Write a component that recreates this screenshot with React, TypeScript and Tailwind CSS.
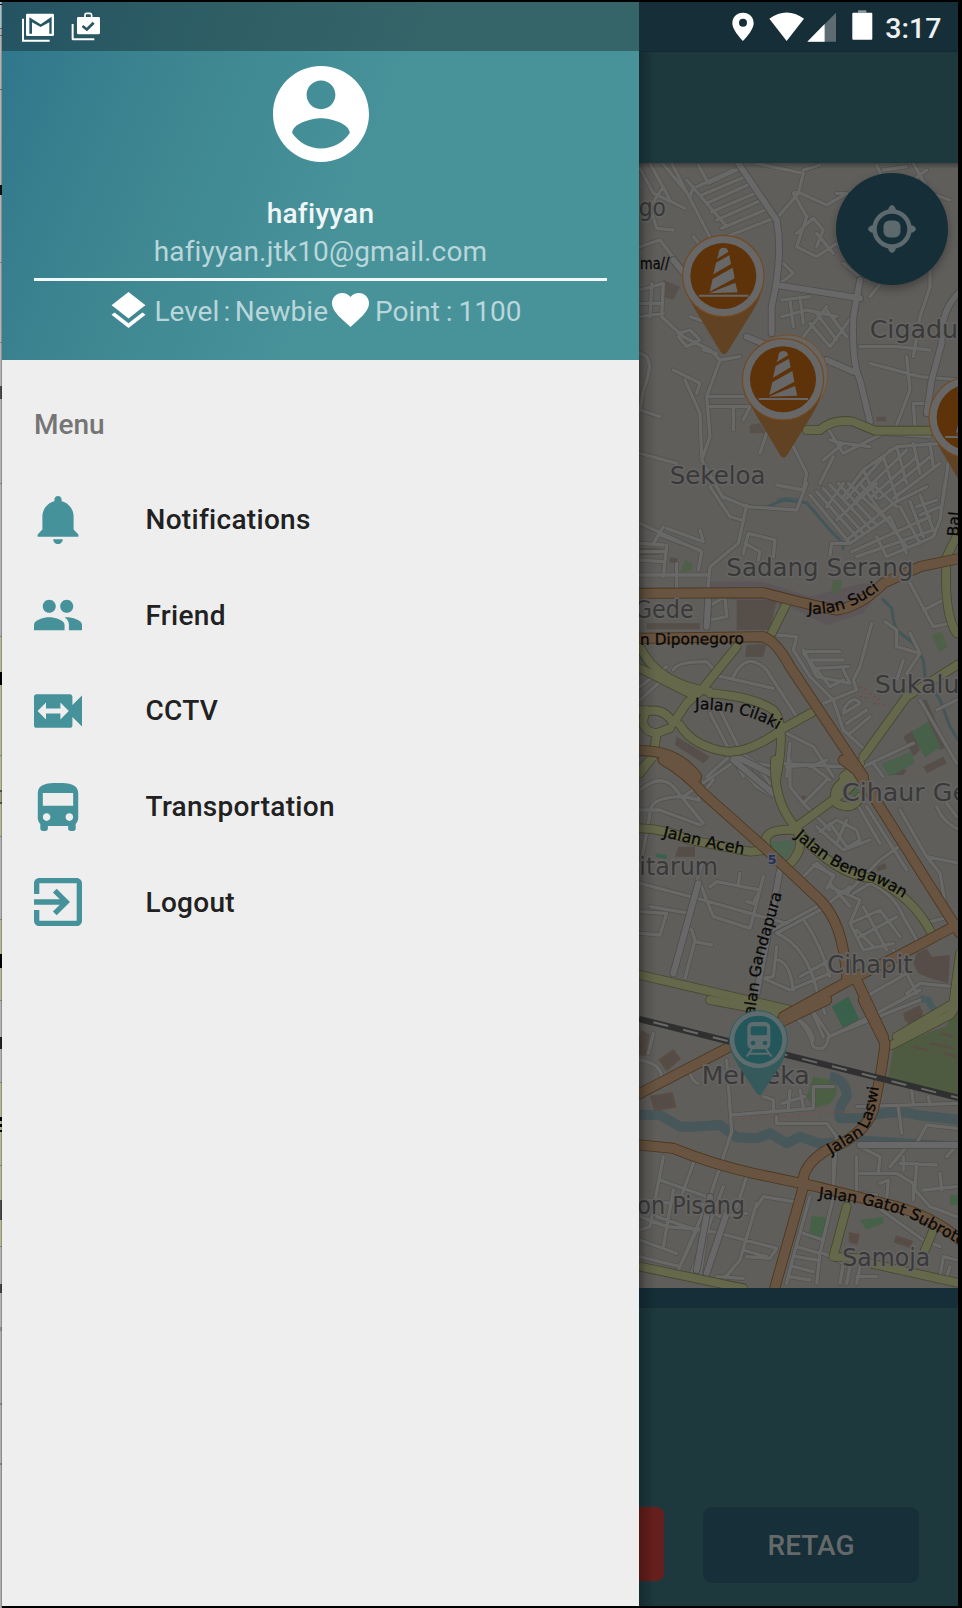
import React from "react";

type Tile = { y: number; d: string };

/* Every map tile is drawn in its own grid, three units to the pixel. */
const place = (y: number) => `translate(630 ${y}) scale(0.33333)`;

function Roads({ tiles, casing, fill, width, edge }: { tiles: Tile[]; casing: string; fill: string; width: number; edge: number }) {
  return (
    <g fill="none" strokeLinecap="round" strokeLinejoin="round">
      {tiles.map((t, i) => (
        <path key={"c" + i} d={t.d} transform={place(t.y)} stroke={casing} strokeWidth={width + edge} />
      ))}
      {tiles.map((t, i) => (
        <path key={"f" + i} d={t.d} transform={place(t.y)} stroke={fill} strokeWidth={width} />
      ))}
    </g>
  );
}

const lanes: Tile[] = [
  {
    y: 150,
    d: "M60 40L120 150M90 30L180 140L190 110M120 30L260 300M170 90L290 230M200 110L310 60M215 135L345 80M230 160L365 100M245 185L375 130M260 210L395 150M275 235L405 180M290 260L430 205M205 45L235 100L320 60M30 55L70 130L165 175M100 110L60 170L80 235L130 240M30 290L90 270L120 310L170 370M30 420L100 400M30 460L90 460M30 500L100 490M65 400L60 500M100 400L95 500L160 560L240 600L270 630L230 740L240 860L215 930L280 1045M190 260L230 310M380 40L520 70L505 130L440 205M520 60L570 45M490 130Q500 120 545 145L590 165L650 130L620 130M490 130L530 200L500 290L560 320L620 280L680 340M500 250L550 205L580 240L560 290M460 340L490 370L450 400M560 250L610 310M455 450L540 440M455 500L530 480M480 450L490 530M510 440L520 520M530 480L620 500M540 520L600 590M560 490L620 570M590 480L650 560M520 560L590 470M600 590L680 480M640 340L700 390M740 330L760 390L720 440M900 350L900 410L870 500L850 620M890 60L850 90L870 120M740 45L760 90M760 60L830 50M850 40L900 130L960 150M690 590L800 590L900 600M720 640L870 680L990 690M830 620L840 720L800 825M850 760L855 830M850 760L900 760M30 610Q80 620 40 720L30 780M30 780L90 800M130 660L210 700L200 730M165 690L210 790L215 920M30 910L140 940M270 630L330 620M240 740L340 740M240 770L360 770L340 810M310 775L310 840M145 550L180 540L210 570L170 590L145 560M220 600L260 610M180 500L240 520M410 850L390 910M480 870L530 970L520 1020L440 1005M590 830L640 910L760 850L900 860M600 870L640 880L580 930M640 880L720 890M610 920L570 1000M640 1040L700 960L800 890L940 880M650 1045L780 900M680 1045L830 900M720 1045L860 920M750 1045L900 920M790 1045L930 940M760 920L800 1045M800 890L830 1000M850 880L870 970M900 880L910 950M960 900L940 1045M700 960L740 1045",
  },
  {
    y: 480,
    d: "M240 20L300 110L335 120M350 75L325 190L240 260L232 345M280 50L350 80L500 90L530 10M30 130L215 215L205 270M90 165L210 210M110 145L220 185L210 150M100 140L70 190M30 190L100 195M30 215L110 215M30 240L100 245M110 195L100 290M30 285L235 285M140 250L140 325M340 220L355 160L435 180L430 230M345 190L390 215L385 240M540 45L660 190L780 110M560 35L680 170M580 25L700 160M600 15L720 145M625 10L740 135M655 10L770 120M690 10L830 200M725 10L800 80M590 80L640 10M620 120L740 10M650 180L790 70L890 20M665 215L900 110M680 230L910 150M780 110L830 220M810 80L870 190M840 65L880 170M870 45L910 150M860 80L920 60M870 105L930 80M945 10L930 120L910 170L770 230L740 170M600 225L605 190L660 190M840 310L910 440L960 430M880 390L960 350M275 590L430 625M130 570Q140 545 230 545L270 590M310 590Q350 510 410 570L500 710M30 620L110 560M30 660L90 605M440 465L500 470L490 510L540 590L610 660M520 510L560 590L660 610L640 570M530 515L630 515M545 540L640 540M560 565L655 560M520 520L600 620L640 600M725 430L690 560L670 600L680 630L580 670M610 660L640 750L700 805M640 690Q670 640 690 670L640 700M650 730L710 690M660 760L720 710M765 425L800 450L800 500L870 520L830 580L860 640M840 460L870 520M820 540L800 600M870 660L980 850M920 690L980 660M240 700L340 890M270 690L370 890M470 760L550 800L610 890M480 790L470 890M440 850L640 860M230 890L320 810L380 850L440 860M700 860L850 790M730 850L760 890M285 350L290 410L240 420L235 380Z",
  },
  {
    y: 760,
    d: "M30 90Q90 40 130 80L220 190M30 150L90 150L210 195M160 110L320 0M200 120L250 60M60 150Q70 110 160 110L210 120M310 0L380 80L430 110M365 0L420 70M60 160L40 270L30 320M130 650L215 310M165 655L195 540L185 510L175 505M195 545L245 555M30 370L220 420L360 460L470 490M60 440L180 460M30 455L110 460L90 525L30 520M210 370L250 470L360 505L400 350M240 380L260 365L390 390L370 430L350 425M330 340L325 375M480 0L480 80L520 130L590 60M470 20L540 15L600 60M540 20L590 0M520 130L600 210M560 200L640 270L720 240M570 215L620 180L680 210L690 240L640 270M600 190L650 260M650 180L620 250M680 130L750 250M710 140L830 330M810 150L890 290L990 310M920 140Q940 190 990 210M950 130L980 170M520 350L560 310L610 350L590 385M550 315L610 345M600 380L690 420L660 490L700 570L790 550M650 400L750 300L820 250M600 370L660 440M670 400L720 370Q790 400 820 470L860 540M660 490L750 450L810 530M690 530L800 470M700 440L770 570M680 510L730 560M410 520L560 440M440 520L570 450L660 380M440 520Q530 560 560 690L585 760M525 485Q570 550 600 650M440 560L430 650L400 655L480 690L600 640M445 600Q480 610 490 690M600 830L740 760L870 690M690 720L830 640L860 700M790 570L830 640M880 490L940 475M890 290L930 340L950 460M830 700L870 670L970 680M480 765Q540 790 550 840M540 740L580 830M600 600L510 650",
  },
  {
    y: 1000,
    d: "M30 180Q90 190 95 230M70 100L55 160M290 180L305 395L240 590L145 810M180 220Q190 250 205 250M490 50Q530 70 550 140Q590 160 595 110L870 0M540 20L600 110M305 345L550 325L550 260L610 260M440 350L440 370L590 370L620 410M400 290L430 300L430 335M480 270L475 325M510 270L520 320M455 310L525 290M610 480L610 550M620 410L610 560M680 320L990 310M845 270L850 310M805 325L815 400M895 290L900 315M690 430L990 435M860 430L890 375L980 385M950 470L985 430M680 470L680 580L740 585M690 520L800 520L850 550L850 600M750 550L775 540L770 600M690 440L750 470L745 520M720 440L830 440L780 500M810 490L920 495M860 490L855 570L900 620M930 520L935 570M880 570L980 560M820 510L820 470M100 470L60 680L30 690M190 490L150 600M350 530L320 620M90 540L230 590M380 620L400 590L490 605M30 650L110 680M50 600L120 610M30 720L140 760M110 680L230 690L440 745L420 775L350 770M380 610L330 780L270 850M200 600L270 650L350 640M180 830L280 560M210 830L230 690M30 770L150 800M260 830L340 835M130 570L100 740M80 650L200 690L160 780M340 750L410 770M540 590L490 770L470 850M610 590L570 760L560 850M520 700L580 720M500 740L570 760M500 770L560 780M490 800L550 815M480 830L540 840M580 760L640 790L630 850M660 800L650 850M680 830L740 830M900 620L980 650M740 620L880 720L930 740M930 830L940 770L980 780M950 830L960 800M690 800L680 850",
  },
];

const streets: Tile[] = [
  { y: 150, d: "M325 40L440 210Q460 320 425 470L425 550M440 405L690 445M690 390L670 500Q665 640 690 690L720 815M990 425Q930 480 935 580L905 690L890 790M590 630L670 665M350 560L420 590M130 330L170 380" },
  { y: 480, d: "M235 350L230 440M300 820L440 890" },
  { y: 760, d: "M450 330L380 700M310 0L430 100M205 370L130 640" },
  { y: 1000, d: "M240 590L200 810M290 640L230 820M690 435L980 435" },
];

const yellow: Tile[] = [
  { y: 150, d: "M530 840L570 840Q610 805 670 815L735 842L905 842" },
  { y: 480, d: "M470 370L425 460M320 500L215 630L170 670L130 730M30 500Q80 610 240 635M30 565L180 640M240 640Q370 650 430 690Q470 730 440 890M550 695L460 745Q360 820 290 815Q190 800 150 735M130 730Q100 680 50 695L30 690M50 690Q20 750 80 760L120 745M80 760L70 830L30 870M700 830L830 650L990 550M985 160L950 230Q940 400 980 460M640 890L690 850" },
  { y: 760, d: "M30 40L60 0M30 205Q100 205 180 240L360 275L405 270M435 0Q430 130 500 205M500 200L650 90L690 50M665 50Q600 80 620 130Q670 155 690 110M490 210Q390 205 410 260M500 210Q530 270 470 320M500 210Q620 350 730 355Q850 410 905 520M30 645L480 750M990 580L970 730L800 830" },
  { y: 1000, d: "M240 0L450 40M990 0L960 45L785 135M650 620L610 770L680 775M30 800L340 865M720 790L990 850M910 690L885 750" },
];

const orange: Tile[] = [
  { y: 480, d: "M30 340L400 338Q560 380 620 390Q690 380 760 310L870 260L990 235M30 475L400 470Q440 485 480 560L700 890M30 812Q140 810 200 890" },
  { y: 760, d: "M100 0Q170 40 220 100L400 260L570 420Q640 490 650 650M640 0L680 30L990 520M990 490L800 590L660 660L460 770M680 660L760 830" },
  { y: 1000, d: "M700 0L765 130Q760 190 730 330Q700 410 590 450Q510 500 520 560M30 280L290 145L590 0M30 435L130 445Q240 490 370 520L560 560L760 610Q900 640 990 720M520 560L435 862" },
];

type Street = { id: string; y: number; d: string; text: string; size: number; len?: number };
const streetNames: Street[] = [
  { id: "suci", y: 480, d: "M533 401Q653 408 763 318", text: "Jalan Suci", size: 47, len: 232 },
  { id: "dipo", y: 480, d: "M30 495L352 492", text: "n Diponegoro", size: 47, len: 312 },
  { id: "cilaki", y: 480, d: "M195 688Q343 686 453 756", text: "Jalan Cilaki", size: 47, len: 258 },
  { id: "aceh", y: 760, d: "M98 230Q212 258 352 286", text: "Jalan Aceh", size: 47, len: 248 },
  { id: "beng", y: 760, d: "M493 231Q623 344 703 354Q783 384 853 439", text: "Jalan Bengawan", size: 47, len: 378 },
  { id: "ganda", y: 760, d: "M371 782L398 600Q428 500 458 390", text: "Jalan Gandapura", size: 47, len: 392 },
  { id: "laswi", y: 1000, d: "M603 464L693 409Q738 370 750 226", text: "Jalan Laswi", size: 47, len: 266 },
  { id: "gatot", y: 1000, d: "M565 594Q763 616 853 661L1013 746", text: "Jalan Gatot Subroto", size: 47, len: 462 },
  { id: "bal", y: 480, d: "M985 170L993 60", text: "Bal", size: 47 },
  { id: "ma", y: 150, d: "M30 356L130 356", text: "ma//", size: 45, len: 88 },
];

type Area = { x: number; y: number; tile: number; text: string; len?: number };
const areas: Area[] = [
  { tile: 150, x: 26, y: 197, text: "go", len: 82 },
  { tile: 150, x: 719, y: 565, text: "Cigadung" },
  { tile: 150, x: 119, y: 1003, text: "Sekeloa", len: 288 },
  { tile: 480, x: 289, y: 288, text: "Sadang Serang", len: 561 },
  { tile: 480, x: 14, y: 415, text: "Gede", len: 177 },
  { tile: 480, x: 734, y: 638, text: "Sukaluyu" },
  { tile: 760, x: 636, y: 122, text: "Cihaur Geulis" },
  { tile: 760, x: 28, y: 346, text: "itarum", len: 236 },
  { tile: 760, x: 592, y: 640, text: "Cihapit", len: 256 },
  { tile: 1000, x: 215, y: 252, text: "Merdeka", len: 324 },
  { tile: 1000, x: 22, y: 641, text: "on Pisang", len: 323 },
  { tile: 1000, x: 637, y: 799, text: "Samoja", len: 264 },
];

function Lighthouse({ x, y, twin }: { x: number; y: number; twin?: boolean }) {
  return (
    <g transform={`translate(${x} ${y})`}>
      {twin && <circle cx="13" cy="-11" r="122" fill="#676663" stroke="#75502a" strokeWidth="3" />}
      <path d="M-119 30Q-100 75 -82 105L-8 228Q2 242 12 228L88 105Q110 70 119 30Z" fill="#614223" />
      <circle r="122" fill="#676767" stroke="#75491d" strokeWidth="3.5" />
      <circle r="99" fill="#5e330a" />
      <path d="M-15 -62Q-15 -85 0 -85Q14 -85 15 -72L-20 -51ZM-22 -40L18 -62L23 -36L-30 -5ZM-32 9L28 -25L34 7L-41 47ZM-43 52L36 20L43 49Z" fill="#676767" />
      <path d="M-73 59H75" stroke="#676767" strokeWidth="6" />
    </g>
  );
}

function CityMap() {
  return (
    <svg className="block h-full w-full" viewBox="639 163 319 1125" preserveAspectRatio="none">
      <defs>
        <linearGradient id="edge" x1="0" x2="1" y1="0" y2="0">
          <stop offset="0" stopColor="#000" stopOpacity="0.36" />
          <stop offset="0.4" stopColor="#000" stopOpacity="0.12" />
          <stop offset="1" stopColor="#000" stopOpacity="0" />
        </linearGradient>
        <linearGradient id="under" x1="0" x2="0" y1="0" y2="1">
          <stop offset="0" stopColor="#000" stopOpacity="0.3" />
          <stop offset="1" stopColor="#000" stopOpacity="0" />
        </linearGradient>
      </defs>
      <rect x="639" y="163" width="320" height="1126" fill="#5f5e5b" />

      {/* land use and water */}
      <g transform={place(150)}>
        <path d="M100 390l50 20-20 40-30-10zM740 800h28v14h-28zM360 825l30-5 20 30-50 0z" fill="#58504b" />
        <path d="M440 1050q30-10 70 0" stroke="#4b5a5c" strokeWidth="8" fill="none" />
      </g>
      <g transform={place(480)}>
        <path d="M235 305L400 305L540 350L700 310L760 320L700 400L590 435L480 380L240 350Z" fill="#5d5658" />
        <path d="M320 360H440L420 450H320ZM350 495L410 490L400 530H345ZM140 770L240 830L220 850L135 795ZM120 232l24 4-6 14-20-4zM30 205h60v20h-60zM50 430h160v18H50zM820 770l30-20 20 60-20 20zM870 660l20 0 60 140-20 10zM880 860l60-30 10 20-60 30z" fill="#564e49" />
        <path d="M165 240l22 10-2 22-34 5zM610 300h26l-6 42-28-4zM905 465l30-10 18 45-25 15z" fill="#4e6048" />
        <path d="M845 755L895 725L932 800L885 832ZM757 858L840 815L853 845L780 890Z" fill="#466049" />
        <path d="M30 530L80 590" stroke="#426049" strokeWidth="12" />
        <path d="M340 75L400 85L460 60L530 68L600 150L635 185L640 210M755 355L785 385L790 420L800 450L850 490L880 540L885 590L930 660L960 740L985 780" stroke="#455659" strokeWidth="9" fill="none" />
        <path d="M690 620l20 10M690 650l30 5M720 640l30 20M730 670l40 5" stroke="#754840" strokeWidth="4" strokeDasharray="6 8" />
      </g>
      <g transform={place(760)}>
        <path d="M860 580L890 565L905 590L960 585L955 670L900 655L865 640L850 610ZM145 260h50v30h-60zM740 320l25-10 5 15-30 10zM820 760l50-25 5 20-50 30zM515 105l15 5-5 15-12-5zM790 20l40 10-10 15-30 0z" fill="#564d48" />
        <path d="M420 245L490 240L488 270L462 300L430 285Z" fill="#4c6450" />
        <path d="M757 10L840-20L853 10L780 50ZM645 90l30-15 15 15-20 20zM460 490l28 5-20 14z" fill="#4a614b" />
        <path d="M607 740L655 710L688 780L640 803Z" fill="#38604a" />
        <path d="M75 280l35 5v12l-30-5z" fill="#39604c" />
        <path d="M870 715L895 720Q910 770 990 780" stroke="#475a5c" strokeWidth="20" fill="none" />
      </g>
      <g transform={place(1000)}>
        <path d="M990 65Q850 110 790 150L775 230L990 300Z" fill="#4e5b40" />
        <path d="M990 5L950 75L990 90Z" fill="#4e5b40" />
        <path d="M550 230L600 240Q640 270 600 310L550 325L530 290Z" fill="#4b5f42" />
        <path d="M605 20L655 -10L688 60L640 85Z" fill="#38604a" />
        <path d="M545 648L595 652L580 725L535 715ZM690 660l70-10v20l-50 20zM960 585h25v30h-25z" fill="#476149" />
        <path d="M30 345H90L150 380H190L270 375L320 412L380 415L420 400L470 430L510 410L580 435M600 230Q650 240 650 290Q620 330 630 355L690 355Q800 325 860 345L990 360" stroke="#485759" strokeWidth="30" fill="none" strokeLinejoin="round" />
        <path d="M570 425L680 415L990 435" stroke="#485759" strokeWidth="18" fill="none" />
        <path d="M90 180l40-28 18 25-38 32zM65 290l60-10 10 40-60 10zM850 140l45 12M930 100l40 10M900 130l70 15M940 160l40 10M660 700l25 5-5 25-20-5zM800 710l45 15-5 15-45-15zM35 95l20 10-10 60-20-5zM835 50l40-15v20l-40 15z" fill="#564c47" stroke="#594d44" strokeWidth="7" />
        <path d="M315 360L680 332" stroke="#765049" strokeWidth="4" strokeDasharray="9 12" />
      </g>

      <Roads tiles={lanes} casing="#51504f" fill="#686867" width={10} edge={4} />
      <Roads tiles={streets} casing="#4e4d4c" fill="#686868" width={18} edge={5} />
      <Roads tiles={yellow} casing="#46482f" fill="#65684b" width={24} edge={5} />
      <Roads tiles={orange} casing="#4b371e" fill="#685440" width={28} edge={5} />

      <g transform={place(1000)} fill="none">
        <path d="M27 57L300 125L470 165L990 295" stroke="#303031" strokeWidth="19" />
        <path d="M70 67L300 125L470 165L990 295" stroke="#696969" strokeWidth="6" strokeDasharray="46 46" />
      </g>

      {/* place and street names */}
      <g fontFamily="DejaVu Sans, sans-serif" strokeLinejoin="round" style={{ paintOrder: "stroke" }}>
        {areas.map((a) => (
          <text key={a.text} transform={place(a.tile)} x={a.x} y={a.y} fontSize="76" textLength={a.len} lengthAdjust="spacingAndGlyphs" fill="#39393a" stroke="#656462" strokeWidth="10">
            {a.text}
          </text>
        ))}
        {streetNames.map((s) => (
          <g key={s.id} transform={place(s.y)}>
            <path id={s.id} d={s.d} fill="none" />
            <text fontSize={s.size} fill="#080808" stroke="#080808" strokeWidth="0.8" textLength={s.len} lengthAdjust="spacingAndGlyphs">
              <textPath href={"#" + s.id} textLength={s.len} lengthAdjust="spacingAndGlyphs">{s.text}</textPath>
            </text>
          </g>
        ))}
        <g transform={place(760)}>
          <rect x="412" y="278" width="28" height="38" fill="#5e6268" />
          <text x="413" y="311" fontSize="38" fontWeight="bold" fill="#28304f">5</text>
        </g>
      </g>

      {/* pins */}
      <g transform={place(150)}>
        <Lighthouse x={280} y={378} />
        <Lighthouse x={459} y={688} twin />
        <Lighthouse x={1019} y={802} />
      </g>
      <g transform={place(1000)}>
        <path d="M301 150Q320 190 330 205L380 280Q388 292 396 280L446 205Q460 185 470 150Z" fill="#36595c" />
        <circle cx="385" cy="119" r="87" fill="#5f6c6d" stroke="#31595c" strokeWidth="3" />
        <circle cx="385" cy="119" r="72" fill="#23575b" />
        <rect x="352" y="66" width="69" height="82" rx="16" fill="#5f6c6d" />
        <rect x="362" y="79" width="49" height="27" rx="5" fill="#23575b" />
        <circle cx="369" cy="129" r="7" fill="#23575b" />
        <circle cx="405" cy="129" r="7" fill="#23575b" />
        <path d="M366 147L350 170M408 147L425 170M358 161H416" stroke="#5f6c6d" strokeWidth="6" />
      </g>
      <rect x="639" y="163" width="319" height="6" fill="url(#under)" />
      <rect x="639" y="163" width="18" height="1125" fill="url(#edge)" />
    </svg>
  );
}

function Glyph({ d, box, className }: { d: string; box: string; className: string }) {
  return (
    <svg viewBox={box} className={className} fill="currentColor">
      <path d={d} />
    </svg>
  );
}

const menu = [
  { label: "Notifications", box: "1.5 2 20 20", d: "M11.5 22c1.1 0 2-.9 2-2h-4c0 1.1.9 2 2 2zm6.5-6v-5.5c0-3.07-2.13-5.64-5-6.32V3.5c0-.83-.67-1.5-1.5-1.5S10 2.67 10 3.5v.68c-2.87.68-5 3.25-5 6.32V16l-2 2v1h17v-1l-2-2z" },
  { label: "Friend", box: "1 1 22 22", d: "M16 11c1.66 0 2.99-1.34 2.99-3S17.66 5 16 5c-1.66 0-3 1.34-3 3s1.34 3 3 3zm-8 0c1.66 0 2.99-1.34 2.99-3S9.66 5 8 5C6.34 5 5 6.34 5 8s1.34 3 3 3zm0 2c-2.33 0-7 1.17-7 3.5V19h14v-2.5c0-2.33-4.67-3.5-7-3.5zm8 0c-.29 0-.62.02-.97.05 1.16.84 1.97 1.97 1.97 3.45V19h6v-2.5c0-2.33-4.67-3.5-7-3.5z" },
  { label: "CCTV", box: "2 2 20 20", d: "M18 9.5V6c0-.55-.45-1-1-1H3c-.55 0-1 .45-1 1v12c0 .55.45 1 1 1h14c.55 0 1-.45 1-1v-3.5l4 4v-13l-4 4zm-5 6V13H7v2.5L3.5 12 7 8.5V11h6V8.5l3.5 3.5-3.5 3.5z" },
  { label: "Transportation", box: "2.5 2 19 19", d: "M4 16c0 .88.39 1.67 1 2.22V20c0 .55.45 1 1 1h1c.55 0 1-.45 1-1v-1h8v1c0 .55.45 1 1 1h1c.55 0 1-.45 1-1v-1.78c.61-.55 1-1.34 1-2.22V6c0-3.5-3.58-4-8-4s-8 .5-8 4v10zm3.5 1c-.83 0-1.5-.67-1.5-1.5S6.67 14 7.5 14s1.5.67 1.5 1.5S8.33 17 7.5 17zm9 0c-.83 0-1.5-.67-1.5-1.5s.67-1.5 1.5-1.5 1.5.67 1.5 1.5-.67 1.5-1.5 1.5zm1.5-6H6V6h12v5z" },
  { label: "Logout", box: "3 3 18 18", d: "M10.09 15.59L11.5 17l5-5-5-5-1.41 1.41L12.67 11H3v2h9.67l-2.58 2.59zM19 3H5c-1.11 0-2 .9-2 2v4h2V5h14v14H5v-4H3v4c0 1.1.89 2 2 2h14c1.1 0 2-.9 2-2V5c0-1.1-.9-2-2-2z" },
];

function Drawer() {
  return (
    <aside className="flex w-[637px] shrink-0 flex-col bg-[#eeeeee]">
      <header className="flex h-[358px] shrink-0 flex-col items-center bg-[linear-gradient(112deg,#2f758c_0%,#33798d_6%,#3e8791_28%,#48929a_56%)] text-[28px] leading-[38px]">
        <div className="mb-[1px] flex h-[49px] w-full shrink-0 items-start bg-[linear-gradient(90deg,rgba(22,42,48,0.45),rgba(33,52,50,0.48)_75%)]">
          <svg viewBox="60 6 250 147" className="ml-[18px] h-[49px] w-[83.3px]" fill="#fff">
            <path d="M66 56H72V119H149V125H66Z" />
            <path fillRule="evenodd" d="M82 41H158Q162 41 162 45V104Q162 108 158 108H82Q78 108 78 104V45Q78 41 82 41ZM88 52V101H96V67L122 81L148 67V101H155V50L122 73Z" />
            <path d="M215 72H221V115H283V121H219Q215 121 215 117Z" />
            <path d="M255 53V45Q255 40 260 40H270Q275 40 275 45V53" fill="none" stroke="#fff" strokeWidth="5" />
            <path fillRule="evenodd" d="M235 51H296Q300 51 300 55V98Q300 103 295 103H236Q231 103 231 98V55Q231 51 235 51ZM250 75L245 81L261 94L284 71L278 65L260 83Z" />
          </svg>
        </div>
        <Glyph
          box="2 2 20 20"
          className="mt-[13.5px] size-24 shrink-0 text-white"
          d="M12 2C6.48 2 2 6.48 2 12s4.48 10 10 10 10-4.48 10-10S17.52 2 12 2zm0 3c1.66 0 3 1.34 3 3s-1.34 3-3 3-3-1.34-3-3 1.34-3 3-3zm0 14.2c-2.5 0-4.71-1.28-6-3.22.03-1.99 4-3.08 6-3.08 1.99 0 5.97 1.09 6 3.08-1.29 1.94-3.5 3.22-6 3.22z"
        />
        <div className="mt-[33.5px] h-[38px] font-medium tracking-[0.25px] text-[#f0f6f7]">hafiyyan</div>
        <div className="h-[38px] tracking-[0.15px] text-[#b9d7da]">hafiyyan.jtk10@gmail.com</div>
        <div className="mt-[7px] h-[2.5px] w-[573px] bg-[#f2f8f8]" />
        <div className="mr-[8px] mt-[12.5px] flex h-[38px] items-center whitespace-pre text-[#b9d7da]">
          <Glyph
            box="3 2 18 19.07"
            className="mb-[5px] mr-[8px] h-[36px] w-[35px] text-white"
            d="M11.99 18.54l-7.37-5.73L3 14.07l9 7 9-7-1.63-1.27-7.38 5.74zM12 16l7.36-5.73L21 9l-9-7-9 7 1.63 1.27L12 16z"
          />
          <span className="[word-spacing:-2.6px]">Level : Newbie</span>
          <Glyph
            box="2 3 20 18.35"
            className="mb-[5px] ml-1 mr-[6px] h-[34px] w-[37px] text-white"
            d="M12 21.35l-1.45-1.32C5.4 15.36 2 12.28 2 8.5 2 5.42 4.42 3 7.5 3c1.74 0 3.41.81 4.5 2.09C13.09 3.81 14.76 3 16.5 3 19.58 3 22 5.42 22 8.5c0 3.78-3.4 6.86-8.55 11.54L12 21.35z"
          />
          <span className="[word-spacing:-1px]">Point : 1100</span>
        </div>
      </header>
      <nav className="flex flex-col px-8 text-[28px] leading-[38px]">
        <h2 className="mt-[46px] h-[38px] font-medium text-[#757575]">Menu</h2>
        <ul className="mt-[28px]">
          {menu.map((m) => (
            <li key={m.label} className="flex h-[95.6px] items-center text-[#212121]">
              <Glyph box={m.box} d={m.d} className="mr-[63.5px] size-12 text-[#46929b]" />
              <span className="mt-[1px] font-medium tracking-[0.3px]">{m.label}</span>
            </li>
          ))}
        </ul>
      </nav>
    </aside>
  );
}

function Screen() {
  return (
    <main className="flex min-w-0 flex-1 flex-col bg-[#1e393e]">
      <div className="flex h-[49px] shrink-0 items-center bg-[#162e37]">
        <svg viewBox="750 6 430 147" className="ml-[91px] h-[49px] w-[143.3px]" fill="#fff">
          <path fillRule="evenodd" d="M789 38C770 38 757 51 757 70C757 92 789 123 789 123S821 92 821 70C821 51 808 38 789 38ZM789 56A12 12 0 1 1 789 80A12 12 0 1 1 789 56Z" />
          <path d="M868 56Q920 19 972 56L920 123Z" />
          <path d="M1068 38V125H982Z" fill="#5d6c72" />
          <path d="M1034 72V125H982Z" />
          <path d="M1134 31H1159V38H1134Z" fill="#8e9b9f" />
          <path d="M1120 38H1174Q1177 38 1177 41V116Q1177 119 1174 119H1120Q1117 119 1117 116V41Q1117 38 1120 38Z" />
        </svg>
        <span className="ml-[12px] mt-[4px] text-[28.5px] font-medium leading-[38px] text-[#eef1f2]">3:17</span>
      </div>
      <div className="h-[112px] shrink-0 border-t border-[#132930] bg-[linear-gradient(90deg,#152b30_0px,#1e393e_16px)]" />
      <div className="relative h-[1125px] shrink-0">
        <CityMap />
        <button className="absolute right-[10px] top-[10px] flex size-[112px] items-center justify-center rounded-full bg-[#162e37] text-[#5c696d] shadow-[0_4px_8px_rgba(0,0,0,0.3)]">
          <svg viewBox="-24 -24 48 48" className="size-12" fill="currentColor">
            <circle r="17.5" fill="none" stroke="currentColor" strokeWidth="4.5" />
            <rect x="-8.5" y="-8.5" width="17" height="17" rx="6" />
            <path d="M-4 -17L-3.5 -21Q0 -27 3.5 -21L4 -17ZM-4 17L-3.5 21Q0 27 3.5 21L4 17ZM-17 -4L-21 -3.5Q-27 0 -21 3.5L-17 4ZM17 -4L21 -3.5Q27 0 21 3.5L17 4Z" />
          </svg>
        </button>
      </div>
      <div className="h-[19.5px] shrink-0 bg-[linear-gradient(90deg,#10242b_0px,#162e37_16px)]" />
      <div className="flex flex-1 items-end bg-[linear-gradient(90deg,#152b30_0px,#1e393e_16px)] pb-[23px]">
        <div className="mb-[2px] h-[74px] w-[24.5px] shrink-0 rounded-r-lg bg-[linear-gradient(90deg,#4d1614_0px,#651f1c_14px)]" />
        <button className="ml-[39.5px] h-[76px] w-[216px] rounded-[9px] bg-[#162f38] pt-[2px] text-[28px] font-medium leading-none text-[#66696a]">RETAG</button>
      </div>
    </main>
  );
}

const slivers = [
  { h: "h-[2px]", c: "bg-black" },
  { h: "h-[2px]", c: "bg-[#a9c4cc]" },
  { h: "h-[1px]", c: "bg-black" },
  { h: "h-[23px]", c: "bg-[#a8c0c6]" },
  { h: "h-[1px]", c: "bg-[#666666]" },
  { h: "h-[6px]", c: "bg-[#b5b5b5]" },
  { h: "h-[1px]", c: "bg-[#666666]" },
  { h: "h-[53px]", c: "bg-[#b3b3b3]" },
  { h: "h-[1px]", c: "bg-[#666666]" },
  { h: "h-[95px]", c: "bg-[#b3b3b3]" },
  { h: "h-[10px]", c: "bg-[#111111]" },
  { h: "h-[67px]", c: "bg-[#b3b3b3]" },
  { h: "h-[1px]", c: "bg-[#888888]" },
  { h: "h-[79px]", c: "bg-[#b3b3b3]" },
  { h: "h-[1px]", c: "bg-[#888888]" },
  { h: "h-[43px]", c: "bg-[#b3b3b3]" },
  { h: "h-[13px]", c: "bg-[#4c4c4c]" },
  { h: "h-[84px]", c: "bg-[#b3b3b3]" },
  { h: "h-[1px]", c: "bg-[#888888]" },
  { h: "h-[152px]", c: "bg-[#b3b3b5]" },
  { h: "h-[1px]", c: "bg-[#888888]" },
  { h: "h-[35px]", c: "bg-[#b9b893]" },
  { h: "h-[13px]", c: "bg-black" },
  { h: "h-[70px]", c: "bg-[#b9b893]" },
  { h: "h-[1px]", c: "bg-[#888888]" },
  { h: "h-[34px]", c: "bg-[#b9b893]" },
  { h: "h-[2px]", c: "bg-[#555555]" },
  { h: "h-[10px]", c: "bg-[#a09f80]" },
  { h: "h-[2px]", c: "bg-[#555555]" },
  { h: "h-[32px]", c: "bg-[#b9b893]" },
  { h: "h-[1px]", c: "bg-[#888888]" },
  { h: "h-[82px]", c: "bg-[#b3b3b5]" },
  { h: "h-[1px]", c: "bg-[#888888]" },
  { h: "h-[34px]", c: "bg-[#b9b893]" },
  { h: "h-[14px]", c: "bg-black" },
  { h: "h-[32px]", c: "bg-[#b9b893]" },
  { h: "h-[1px]", c: "bg-[#888888]" },
  { h: "h-[36px]", c: "bg-[#b3b3b5]" },
  { h: "h-[12px]", c: "bg-[#222222]" },
  { h: "h-[33px]", c: "bg-[#b3b3b5]" },
  { h: "h-[1px]", c: "bg-[#888888]" },
  { h: "h-[34px]", c: "bg-[#b9b893]" },
  { h: "h-[4px]", c: "bg-black" },
  { h: "h-[3px]", c: "bg-[#b9b893]" },
  { h: "h-[3px]", c: "bg-black" },
  { h: "h-[3px]", c: "bg-[#b9b893]" },
  { h: "h-[2px]", c: "bg-black" },
  { h: "h-[33px]", c: "bg-[#b9b893]" },
  { h: "h-[1px]", c: "bg-[#888888]" },
  { h: "h-[34px]", c: "bg-[#b9b893]" },
  { h: "h-[20px]", c: "bg-[#4c4c4c]" },
  { h: "h-[26px]", c: "bg-[#b9b893]" },
  { h: "h-[1px]", c: "bg-[#888888]" },
  { h: "h-[37px]", c: "bg-[#b3b3b5]" },
  { h: "h-[9px]", c: "bg-[#444444]" },
  { h: "h-[34px]", c: "bg-[#b3b3b5]" },
  { h: "h-[4px]", c: "bg-[#919191]" },
  { h: "h-[72px]", c: "bg-[#b0b0b0]" },
  { h: "h-[2px]", c: "bg-[#888888]" },
  { h: "h-[58px]", c: "bg-[#b0b0b0]" },
  { h: "h-[2px]", c: "bg-[#888888]" },
  { h: "flex-1", c: "bg-[#b0b0b0]" },
];

export default function App() {
  return (
    <div className="flex h-[1608px] w-[962px] overflow-hidden bg-black font-[Roboto,sans-serif]">
      <div className="flex w-[2px] shrink-0 flex-col">
        {slivers.map((s, i) => (
          <div key={i} className={`w-full border-r border-black/20 ${s.h} ${s.c}`} />
        ))}
      </div>
      <div className="mb-[2px] mr-1 mt-[2px] flex min-w-0 flex-1">
        <Drawer />
        <Screen />
      </div>
    </div>
  );
}
